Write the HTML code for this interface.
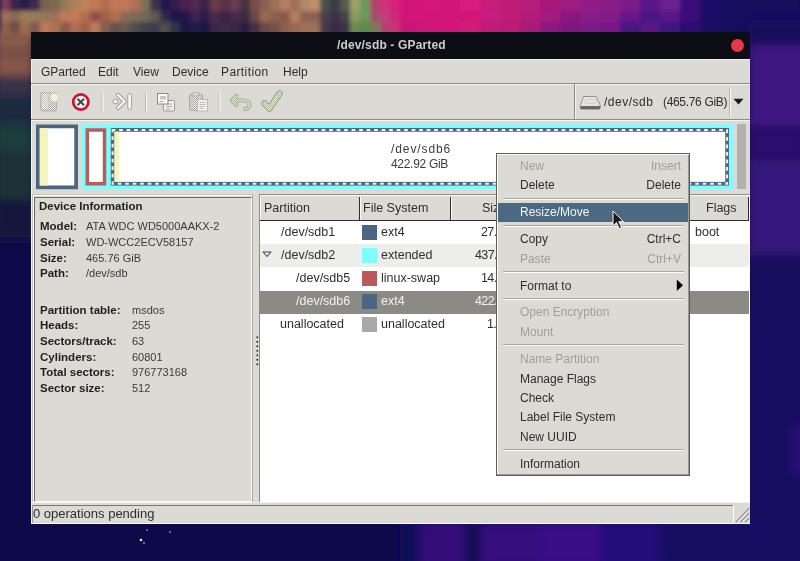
<!DOCTYPE html>
<html><head><meta charset="utf-8">
<style>
html,body{margin:0;padding:0;}
body{width:800px;height:561px;overflow:hidden;position:relative;background:#0f0a4a;font-family:"Liberation Sans",sans-serif;}
#bg{position:absolute;left:0;top:0;}
.a{position:absolute;}
.t{will-change:transform;position:absolute;white-space:pre;line-height:12px;font-size:12px;color:#2e2e2e;}
.b{font-weight:bold;font-size:11.5px;color:#1e1e1e;}
.v{font-size:11px;color:#3a3a3a;}
.d{color:#a09e9a;}
.r{text-align:right;}
.L{font-size:12.5px;line-height:12.5px;}
.sep{left:503px;width:181px;height:1px;background:#a8a6a0;box-shadow:0 1px 0 #fbfbfa;}
</style></head><body>
<svg id="bg" width="800" height="561" viewBox="0 0 800 561">
<defs><filter id="b5" x="-10%" y="-10%" width="120%" height="120%"><feGaussianBlur stdDeviation="5"/></filter><filter id="b3" x="-5%" y="-5%" width="110%" height="110%"><feGaussianBlur stdDeviation="2"/></filter></defs>
<rect width="800" height="561" fill="#0e0a4a"/>
<g filter="url(#b3)">
<rect x="0" y="-6" width="10.5" height="17" fill="#7a3a5a"/>
<rect x="0" y="11" width="10.5" height="11" fill="#9a7058"/>
<rect x="0" y="22" width="10.5" height="16" fill="#8a6048"/>
<rect x="10" y="-6" width="10.5" height="17" fill="#3a2048"/>
<rect x="10" y="11" width="10.5" height="11" fill="#8a6a50"/>
<rect x="10" y="22" width="10.5" height="16" fill="#6a4a48"/>
<rect x="20" y="-6" width="10.5" height="17" fill="#2a1a48"/>
<rect x="20" y="11" width="10.5" height="11" fill="#9a7a58"/>
<rect x="20" y="22" width="10.5" height="16" fill="#a07050"/>
<rect x="30" y="-6" width="10.5" height="17" fill="#3a2a50"/>
<rect x="30" y="11" width="10.5" height="11" fill="#9a7a58"/>
<rect x="30" y="22" width="10.5" height="16" fill="#7a5a50"/>
<rect x="40" y="-6" width="10.5" height="17" fill="#7a6050"/>
<rect x="40" y="11" width="10.5" height="11" fill="#907858"/>
<rect x="40" y="22" width="10.5" height="16" fill="#c07858"/>
<rect x="50" y="-6" width="10.5" height="17" fill="#806850"/>
<rect x="50" y="11" width="10.5" height="11" fill="#a07058"/>
<rect x="50" y="22" width="10.5" height="16" fill="#b07050"/>
<rect x="60" y="-6" width="10.5" height="17" fill="#907a58"/>
<rect x="60" y="11" width="10.5" height="11" fill="#c07a58"/>
<rect x="60" y="22" width="10.5" height="16" fill="#8a5a48"/>
<rect x="70" y="-6" width="10.5" height="17" fill="#b08058"/>
<rect x="70" y="11" width="10.5" height="11" fill="#c87858"/>
<rect x="70" y="22" width="10.5" height="16" fill="#b07050"/>
<rect x="80" y="-6" width="10.5" height="17" fill="#c08058"/>
<rect x="80" y="11" width="10.5" height="11" fill="#b07050"/>
<rect x="80" y="22" width="10.5" height="16" fill="#a06048"/>
<rect x="90" y="-6" width="10.5" height="17" fill="#c07858"/>
<rect x="90" y="11" width="10.5" height="11" fill="#905048"/>
<rect x="90" y="22" width="10.5" height="16" fill="#c07858"/>
<rect x="100" y="-6" width="10.5" height="17" fill="#b07050"/>
<rect x="100" y="11" width="10.5" height="11" fill="#a06048"/>
<rect x="100" y="22" width="10.5" height="16" fill="#806050"/>
<rect x="110" y="-6" width="10.5" height="17" fill="#c07858"/>
<rect x="110" y="11" width="10.5" height="11" fill="#b07050"/>
<rect x="110" y="22" width="10.5" height="16" fill="#6a5050"/>
<rect x="120" y="-6" width="10.5" height="17" fill="#c07858"/>
<rect x="120" y="11" width="10.5" height="11" fill="#8a6a58"/>
<rect x="120" y="22" width="10.5" height="16" fill="#6a5a50"/>
<rect x="130" y="-6" width="10.5" height="17" fill="#b07058"/>
<rect x="130" y="11" width="10.5" height="11" fill="#7a6a58"/>
<rect x="130" y="22" width="10.5" height="16" fill="#505048"/>
<rect x="140" y="-6" width="10.5" height="17" fill="#807058"/>
<rect x="140" y="11" width="10.5" height="11" fill="#706a58"/>
<rect x="140" y="22" width="10.5" height="16" fill="#404050"/>
<rect x="150" y="-6" width="10.5" height="17" fill="#403048"/>
<rect x="150" y="11" width="10.5" height="11" fill="#605850"/>
<rect x="150" y="22" width="10.5" height="16" fill="#403a50"/>
<rect x="160" y="-6" width="10.5" height="17" fill="#201850"/>
<rect x="160" y="11" width="10.5" height="11" fill="#302a48"/>
<rect x="160" y="22" width="10.5" height="16" fill="#505048"/>
<rect x="170" y="-6" width="10.5" height="17" fill="#301a50"/>
<rect x="170" y="11" width="10.5" height="11" fill="#1a1448"/>
<rect x="170" y="22" width="10.5" height="16" fill="#303048"/>
<rect x="180" y="-6" width="10.5" height="17" fill="#4a2050"/>
<rect x="180" y="11" width="10.5" height="11" fill="#201848"/>
<rect x="180" y="22" width="10.5" height="16" fill="#1a1848"/>
<rect x="190" y="-6" width="10.5" height="17" fill="#502a50"/>
<rect x="190" y="11" width="10.5" height="11" fill="#3a2050"/>
<rect x="190" y="22" width="10.5" height="16" fill="#1a1a48"/>
<rect x="200" y="-6" width="10.5" height="17" fill="#3a2048"/>
<rect x="200" y="11" width="10.5" height="11" fill="#2a1a48"/>
<rect x="200" y="22" width="10.5" height="16" fill="#201848"/>
<rect x="210" y="-6" width="10.5" height="17" fill="#6a3a48"/>
<rect x="210" y="11" width="10.5" height="11" fill="#4a2a48"/>
<rect x="210" y="22" width="10.5" height="16" fill="#3a2848"/>
<rect x="220" y="-6" width="10.5" height="17" fill="#5a3048"/>
<rect x="220" y="11" width="10.5" height="11" fill="#3a2048"/>
<rect x="220" y="22" width="10.5" height="16" fill="#3a2a48"/>
<rect x="230" y="-6" width="10.5" height="17" fill="#6a3a50"/>
<rect x="230" y="11" width="10.5" height="11" fill="#4a2a48"/>
<rect x="230" y="22" width="10.5" height="16" fill="#3a2848"/>
<rect x="240" y="-6" width="10.5" height="17" fill="#4a3040"/>
<rect x="240" y="11" width="10.5" height="11" fill="#3a2a40"/>
<rect x="240" y="22" width="10.5" height="16" fill="#2a1a40"/>
<rect x="250" y="-6" width="10.5" height="17" fill="#7a5048"/>
<rect x="250" y="11" width="10.5" height="11" fill="#6a4a48"/>
<rect x="250" y="22" width="10.5" height="16" fill="#4a3040"/>
<rect x="260" y="-6" width="10.5" height="17" fill="#8a6050"/>
<rect x="260" y="11" width="10.5" height="11" fill="#9a6a50"/>
<rect x="260" y="22" width="10.5" height="16" fill="#6a4a48"/>
<rect x="270" y="-6" width="10.5" height="17" fill="#a07058"/>
<rect x="270" y="11" width="10.5" height="11" fill="#8a6050"/>
<rect x="270" y="22" width="10.5" height="16" fill="#7a5048"/>
<rect x="280" y="-6" width="10.5" height="17" fill="#b08060"/>
<rect x="280" y="11" width="10.5" height="11" fill="#8a5850"/>
<rect x="280" y="22" width="10.5" height="16" fill="#8a6050"/>
<rect x="290" y="-6" width="10.5" height="17" fill="#a07058"/>
<rect x="290" y="11" width="10.5" height="11" fill="#b08060"/>
<rect x="290" y="22" width="10.5" height="16" fill="#9a6a50"/>
<rect x="300" y="-6" width="10.5" height="17" fill="#b08868"/>
<rect x="300" y="11" width="10.5" height="11" fill="#906050"/>
<rect x="300" y="22" width="10.5" height="16" fill="#a07058"/>
<rect x="310" y="-6" width="10.5" height="17" fill="#c09068"/>
<rect x="310" y="11" width="10.5" height="11" fill="#8a6058"/>
<rect x="310" y="22" width="10.5" height="16" fill="#a07058"/>
<rect x="320" y="-6" width="10.5" height="17" fill="#4a5048"/>
<rect x="320" y="11" width="10.5" height="11" fill="#4a4048"/>
<rect x="320" y="22" width="10.5" height="16" fill="#4a3848"/>
<rect x="330" y="-6" width="10.5" height="17" fill="#3a3a48"/>
<rect x="330" y="11" width="10.5" height="11" fill="#3a3048"/>
<rect x="330" y="22" width="10.5" height="16" fill="#3a2a48"/>
<rect x="340" y="-6" width="10.5" height="17" fill="#5a5a50"/>
<rect x="340" y="11" width="10.5" height="11" fill="#4a4048"/>
<rect x="340" y="22" width="10.5" height="16" fill="#3a3048"/>
<rect x="350" y="-6" width="10.5" height="17" fill="#a0a068"/>
<rect x="350" y="11" width="10.5" height="11" fill="#8a9a60"/>
<rect x="350" y="22" width="10.5" height="16" fill="#6a8a50"/>
<rect x="360" y="-6" width="10.5" height="17" fill="#6a9a58"/>
<rect x="360" y="11" width="10.5" height="11" fill="#6a9a58"/>
<rect x="360" y="22" width="10.5" height="16" fill="#5a8a50"/>
<rect x="370" y="-6" width="10.5" height="17" fill="#b04070"/>
<rect x="370" y="11" width="10.5" height="11" fill="#a05068"/>
<rect x="370" y="22" width="10.5" height="16" fill="#7a7a58"/>
<rect x="380" y="-6" width="10.5" height="17" fill="#d0307a"/>
<rect x="380" y="11" width="10.5" height="11" fill="#c0407a"/>
<rect x="380" y="22" width="10.5" height="16" fill="#b04070"/>
<rect x="390" y="-6" width="10.5" height="17" fill="#d82078"/>
<rect x="390" y="11" width="10.5" height="11" fill="#d02878"/>
<rect x="390" y="22" width="10.5" height="16" fill="#c83078"/>
<rect x="400" y="-6" width="20.5" height="17" fill="#d21478"/>
<rect x="400" y="11" width="20.5" height="11" fill="#d01478"/>
<rect x="400" y="22" width="20.5" height="16" fill="#c81478"/>
<rect x="420" y="-6" width="20.5" height="17" fill="#d41478"/>
<rect x="420" y="11" width="20.5" height="11" fill="#d21478"/>
<rect x="420" y="22" width="20.5" height="16" fill="#d01478"/>
<rect x="440" y="-6" width="20.5" height="17" fill="#d21478"/>
<rect x="440" y="11" width="20.5" height="11" fill="#d21478"/>
<rect x="440" y="22" width="20.5" height="16" fill="#d21478"/>
<rect x="460" y="-6" width="20.5" height="17" fill="#d81c80"/>
<rect x="460" y="11" width="20.5" height="11" fill="#d21478"/>
<rect x="460" y="22" width="20.5" height="16" fill="#d01a78"/>
<rect x="480" y="-6" width="20.5" height="17" fill="#c81a7a"/>
<rect x="480" y="11" width="20.5" height="11" fill="#c81a80"/>
<rect x="480" y="22" width="20.5" height="16" fill="#c01a78"/>
<rect x="500" y="-6" width="20.5" height="17" fill="#c01a78"/>
<rect x="500" y="11" width="20.5" height="11" fill="#be1a78"/>
<rect x="500" y="22" width="20.5" height="16" fill="#b81a78"/>
<rect x="520" y="-6" width="20.5" height="17" fill="#b81a78"/>
<rect x="520" y="11" width="20.5" height="11" fill="#b01a78"/>
<rect x="520" y="22" width="20.5" height="16" fill="#a81a78"/>
<rect x="540" y="-6" width="20.5" height="17" fill="#a8187a"/>
<rect x="540" y="11" width="20.5" height="11" fill="#a01a80"/>
<rect x="540" y="22" width="20.5" height="16" fill="#901880"/>
<rect x="560" y="-6" width="20.5" height="17" fill="#a01a80"/>
<rect x="560" y="11" width="20.5" height="11" fill="#8a1880"/>
<rect x="560" y="22" width="20.5" height="16" fill="#801880"/>
<rect x="580" y="-6" width="20.5" height="17" fill="#901a88"/>
<rect x="580" y="11" width="20.5" height="11" fill="#8a1a88"/>
<rect x="580" y="22" width="20.5" height="16" fill="#7a1a88"/>
<rect x="600" y="-6" width="20.5" height="17" fill="#8a1a88"/>
<rect x="600" y="11" width="20.5" height="11" fill="#801a88"/>
<rect x="600" y="22" width="20.5" height="16" fill="#7a1888"/>
<rect x="620" y="-6" width="20.5" height="17" fill="#7a1a88"/>
<rect x="620" y="11" width="20.5" height="11" fill="#6a1888"/>
<rect x="620" y="22" width="20.5" height="16" fill="#4a1480"/>
<rect x="640" y="-6" width="20.5" height="17" fill="#5a1888"/>
<rect x="640" y="11" width="20.5" height="11" fill="#4a1480"/>
<rect x="640" y="22" width="20.5" height="16" fill="#5a1888"/>
<rect x="660" y="-6" width="20.5" height="17" fill="#6a2090"/>
<rect x="660" y="11" width="20.5" height="11" fill="#5a1888"/>
<rect x="660" y="22" width="20.5" height="16" fill="#3e1280"/>
<rect x="680" y="-6" width="20.5" height="17" fill="#3a1078"/>
<rect x="680" y="11" width="20.5" height="11" fill="#3a1078"/>
<rect x="680" y="22" width="20.5" height="16" fill="#2a0e70"/>
<rect x="700" y="-6" width="20.5" height="17" fill="#1e0c68"/>
<rect x="700" y="11" width="20.5" height="11" fill="#1a0c66"/>
<rect x="700" y="22" width="20.5" height="16" fill="#1a0c66"/>
<rect x="720" y="-6" width="20.5" height="17" fill="#140a60"/>
<rect x="720" y="11" width="20.5" height="11" fill="#140a60"/>
<rect x="720" y="22" width="20.5" height="16" fill="#140a60"/>
<rect x="740" y="-6" width="20.5" height="17" fill="#120a5c"/>
<rect x="740" y="11" width="20.5" height="11" fill="#140a60"/>
<rect x="740" y="22" width="20.5" height="16" fill="#140a60"/>
<rect x="760" y="-6" width="20.5" height="17" fill="#120a5c"/>
<rect x="760" y="11" width="20.5" height="11" fill="#140a60"/>
<rect x="760" y="22" width="20.5" height="16" fill="#160a62"/>
<rect x="780" y="-6" width="20.5" height="17" fill="#120a5c"/>
<rect x="780" y="11" width="20.5" height="11" fill="#140a60"/>
<rect x="780" y="22" width="20.5" height="16" fill="#160a62"/>
</g>
<g filter="url(#b5)">
<rect x="748" y="320" width="60" height="250" fill="#130b60"/>
<rect x="660" y="522" width="150" height="45" fill="#140b62"/>
<rect x="792" y="425" width="20" height="50" fill="#2a1078"/>
<rect x="748" y="20" width="60" height="25" fill="#180a5c"/>
<rect x="748" y="45" width="60" height="80" fill="#3e1480"/>
<rect x="748" y="125" width="60" height="35" fill="#2c0e6c"/>
<rect x="748" y="160" width="60" height="95" fill="#34127a"/>
<rect x="748" y="255" width="60" height="65" fill="#170a5c"/>
<rect x="-6" y="32" width="40" height="13" fill="#8e5e4a"/>
<rect x="-6" y="45" width="40" height="15" fill="#7a5046"/>
<rect x="-6" y="60" width="40" height="15" fill="#8a5846"/>
<rect x="-6" y="75" width="40" height="20" fill="#3a3048"/>
<rect x="-6" y="95" width="40" height="30" fill="#1a2c40"/>
<rect x="-6" y="125" width="40" height="25" fill="#1e3c3c"/>
<rect x="-6" y="150" width="40" height="50" fill="#1a3238"/>
<rect x="-6" y="200" width="40" height="40" fill="#12183e"/>
<rect x="400" y="522" width="20" height="45" fill="#100a58"/>
<rect x="420" y="522" width="45" height="45" fill="#34107a"/>
<rect x="465" y="522" width="15" height="45" fill="#0e0a52"/>
<rect x="480" y="522" width="60" height="45" fill="#34107c"/>
<rect x="540" y="522" width="60" height="45" fill="#3a1086"/>
<rect x="600" y="522" width="60" height="45" fill="#24107a"/>
<rect x="660" y="522" width="150" height="45" fill="#140a64"/>
</g>
<g fill="#e8e8f0"><circle cx="141" cy="540" r="1.3"/><circle cx="144" cy="543" r="0.8"/><circle cx="147" cy="530" r="0.7"/><circle cx="170" cy="532" r="0.8"/></g>
</svg>

<!-- window body -->
<div class="a" style="left:31px;top:32px;width:719px;height:492px;background:#dcdad5;"></div>
<div class="a" style="left:31px;top:59px;width:1px;height:465px;background:#f6f5f2;"></div>
<!-- title bar -->
<div class="a" style="left:31px;top:32px;width:719px;height:27px;background:#0d0d15;"></div>
<div class="t" style="left:337px;top:39px;font-weight:bold;color:#cdcdcd;letter-spacing:0.15px;">/dev/sdb - GParted</div>
<div class="a" style="left:731px;top:39px;width:13px;height:13px;border-radius:50%;background:#e8364a;"></div>
<div class="a" style="left:31px;top:59px;width:719px;height:1px;background:#f2f1ee;"></div>

<!-- menubar -->
<div class="t" style="left:41px;top:66px;">GParted</div>
<div class="t" style="left:98px;top:66px;">Edit</div>
<div class="t" style="left:133px;top:66px;">View</div>
<div class="t" style="left:172px;top:66px;">Device</div>
<div class="t" style="left:221px;top:66px;letter-spacing:0.4px;">Partition</div>
<div class="t" style="left:283px;top:66px;">Help</div>
<div class="a" style="left:31px;top:83px;width:719px;height:1px;background:#8e8b85;"></div>
<div class="a" style="left:31px;top:84px;width:719px;height:1px;background:#f4f3f0;"></div>

<!-- toolbar -->
<div class="a" style="left:31px;top:119px;width:719px;height:1px;background:#8e8b85;"></div>
<div class="a" style="left:31px;top:120px;width:719px;height:1px;background:#f4f3f0;"></div>


<!-- toolbar icons -->
<svg class="a" style="left:32px;top:85px;" width="260" height="34" viewBox="32 85 260 34">
<defs>
<pattern id="chk" width="2" height="2" patternUnits="userSpaceOnUse"><rect width="2" height="2" fill="#f0efec"/><rect width="1" height="1" fill="#a8a6a2"/><rect x="1" y="1" width="1" height="1" fill="#a8a6a2"/></pattern>
<pattern id="chkl" width="2" height="2" patternUnits="userSpaceOnUse"><rect width="2" height="2" fill="#eeeeea"/><rect width="1" height="1" fill="#c8c6c2"/><rect x="1" y="1" width="1" height="1" fill="#c8c6c2"/></pattern>
<pattern id="chkg" width="2" height="2" patternUnits="userSpaceOnUse"><rect width="2" height="2" fill="#dfe8c8"/><rect width="1" height="1" fill="#b8c8a0"/><rect x="1" y="1" width="1" height="1" fill="#a8b890"/></pattern>
</defs>
<!-- new -->
<rect x="40.5" y="92.5" width="16" height="18.5" rx="1.5" fill="url(#chk)" stroke="#9a9894" stroke-width="1" stroke-dasharray="1 1"/>
<rect x="42" y="94" width="6" height="15" fill="#e4e3e0" opacity="0.6"/>
<circle cx="54.5" cy="97.5" r="4.3" fill="#eeeeea" stroke="#cfdc98" stroke-width="1.5" stroke-dasharray="1.2 0.8"/>
<!-- delete -->
<circle cx="80.8" cy="102" r="7.6" fill="#f4f4f4" stroke="#cc1530" stroke-width="2.8"/>
<path d="M77.5 98.7 L84.1 105.3 M84.1 98.7 L77.5 105.3" stroke="#4a4a4a" stroke-width="2" stroke-linecap="butt"/>
<!-- sep -->
<rect x="101.5" y="92" width="1" height="20" fill="#bcbab4"/><rect x="102.5" y="92" width="1" height="20" fill="#fafaf8"/>
<!-- apply arrow -->
<circle cx="115.5" cy="101.5" r="2.4" fill="#f4f4f2" stroke="#a09e9a" stroke-width="1"/>
<path d="M118 95 L124.5 101.5 L118 108" fill="none" stroke="#a09e9a" stroke-width="4.4" stroke-linecap="round" stroke-linejoin="round"/>
<path d="M118 95 L124.5 101.5 L118 108" fill="none" stroke="#f8f8f6" stroke-width="2.4" stroke-linecap="round" stroke-linejoin="round"/>
<rect x="127.8" y="93.5" width="3.8" height="16" rx="1.9" fill="#f8f8f6" stroke="#a09e9a" stroke-width="1"/>
<!-- sep -->
<rect x="145" y="92" width="1" height="20" fill="#bcbab4"/><rect x="146" y="92" width="1" height="20" fill="#fafaf8"/>
<!-- copy -->
<rect x="163.5" y="100.5" width="11" height="10.5" rx="1" fill="#f2f1ee" stroke="#9a9894" stroke-width="1"/>
<path d="M166 104h6M166 106.5h6M166 109h4" stroke="#9a9894" stroke-width="0.8"/>
<rect x="157.5" y="93.5" width="10.5" height="10.5" fill="#fafafa" stroke="#8a8884" stroke-width="1"/>
<rect x="160" y="96" width="6" height="3.5" fill="#c8c6c2"/>
<path d="M159.5 101.5h4" stroke="#9a9894" stroke-width="0.8"/>
<!-- paste -->
<rect x="189.5" y="94.5" width="13" height="16" rx="1" fill="url(#chk)" stroke="#a8a6a2" stroke-width="1"/>
<rect x="193" y="92.5" width="6" height="3.5" fill="url(#chkl)" stroke="#a8a6a2" stroke-width="0.7"/>
<rect x="197.5" y="99.5" width="10" height="11.5" fill="#f2f1ee" stroke="#b0aeaa" stroke-width="0.8"/>
<path d="M199.5 102.5h6M199.5 104.5h6M199.5 106.5h6M199.5 108.5h4" stroke="#a8a6a2" stroke-width="0.7"/>
<!-- sep -->
<rect x="218.5" y="92" width="1" height="20" fill="#bcbab4"/><rect x="219.5" y="92" width="1" height="20" fill="#fafaf8"/>
<!-- undo -->
<path d="M236.5 96 L232 100.5 L236.5 105 M232.5 100.5 H244 Q249.5 100.5 249.5 105 Q249.5 108.5 245 109" fill="none" stroke="#a8a6a2" stroke-width="4.2" stroke-linecap="round" stroke-linejoin="round"/>
<path d="M236.5 96 L232 100.5 L236.5 105 M232.5 100.5 H244 Q249.5 100.5 249.5 105 Q249.5 108.5 245 109" fill="none" stroke="url(#chkg)" stroke-width="2.6" stroke-linecap="round" stroke-linejoin="round"/>
<!-- apply check -->
<path d="M264.5 103.5 L269.5 108.5 L279.5 93.5" fill="none" stroke="#9a9894" stroke-width="6.4" stroke-linecap="round" stroke-linejoin="round"/>
<path d="M264.5 103.5 L269.5 108.5 L279.5 93.5" fill="none" stroke="url(#chkg)" stroke-width="4.6" stroke-linecap="round" stroke-linejoin="round"/>
</svg>

<!-- combo drive icon and arrow -->
<svg class="a" style="left:578px;top:94px;" width="25" height="18" viewBox="578 94 25 18">
<path d="M583.5 96.5 H596 L600.3 105.5 V108 Q600.3 109.2 599 109.2 H581.5 Q580.3 109.2 580.3 108 V105.5 Z" fill="#e6e5e2" stroke="#8a8884" stroke-width="0.9"/>
<ellipse cx="590.3" cy="101.5" rx="6" ry="2.2" fill="none" stroke="#c8c6c2" stroke-width="0.8"/>
<rect x="580.6" y="106" width="19.4" height="3" fill="#6a6864"/>
</svg>
<div class="a" style="left:729px;top:88px;width:1px;height:28px;background:#b8b6b0;"></div>
<div class="a" style="left:730px;top:88px;width:1px;height:28px;background:#f8f7f4;"></div>
<svg class="a" style="left:733px;top:98px;" width="12" height="8" viewBox="0 0 12 8"><path d="M0.5 0.8 H10.5 L5.5 6.5 Z" fill="#1a1a1a"/></svg>

<!-- combo -->
<div class="a" style="left:574px;top:84px;width:1px;height:35px;background:#8e8b85;"></div>
<div class="a" style="left:575px;top:85px;width:1px;height:34px;background:#f4f3f0;"></div>
<div class="t" style="left:604px;top:96px;letter-spacing:0.5px;">/dev/sdb</div><div class="t" style="left:663px;top:96px;letter-spacing:-0.33px;">(465.76 GiB)</div>

<!-- partition graphic -->
<svg class="a" style="left:0;top:0;" width="800" height="200" viewBox="0 0 800 200">
<rect x="36" y="124.5" width="42" height="64.7" fill="#4b6683"/>
<rect x="39.75" y="128.25" width="34.5" height="57.2" fill="#fff"/>
<rect x="39.75" y="128.25" width="8.2" height="57.2" fill="#f3f6bc"/>
<rect x="81.5" y="124.25" width="651.5" height="65.25" fill="#80fcff"/>
<rect x="85.5" y="128.25" width="20.75" height="57.25" fill="#bb5a5a"/>
<rect x="89" y="131.75" width="13.75" height="50.25" fill="#fff"/>
<rect x="110.75" y="128" width="618.25" height="57.6" fill="#4b6683"/>
<rect x="114.5" y="131.75" width="610.75" height="50.1" fill="#fff"/>
<rect x="114.5" y="131.75" width="4.5" height="50.1" fill="#f3f6bc"/>
<path d="M112.6 129.9 H727.1 V183.7 H112.6 Z" fill="none" stroke="#f0f4e0" stroke-width="2" stroke-dasharray="3.75 3.75" stroke-dashoffset="1"/>
</svg>
<div class="t" style="left:391px;top:143px;color:#3c3c3c;letter-spacing:0.9px;">/dev/sdb6</div>
<div class="t" style="left:391px;top:158px;color:#3c3c3c;letter-spacing:-0.3px;">422.92 GiB</div>
<div class="a" style="left:737px;top:124px;width:9px;height:65px;background:#b3b1ad;"></div>

<!-- left pane -->
<div class="a" style="left:32px;top:194px;width:221px;height:309px;box-sizing:border-box;border-top:1px solid #c4c2bc;border-left:1px solid #c4c2bc;border-bottom:1px solid #a8a6a0;border-right:1px solid #a8a6a0;"></div>
<div class="a" style="left:33px;top:195px;width:219px;height:307px;box-sizing:border-box;border-top:1px solid #fbfbfa;border-left:1px solid #fbfbfa;"></div>
<div class="a" style="left:34px;top:197px;width:218px;height:305px;box-sizing:border-box;border-top:1px solid #6a6864;border-left:1px solid #6a6864;border-bottom:1px solid #fbfbfa;border-right:1px solid #fbfbfa;"></div>
<div class="t b" style="left:39px;top:200px;">Device Information</div>
<div class="t b" style="left:40px;top:220px;">Model:</div>
<div class="t b" style="left:40px;top:236px;">Serial:</div>
<div class="t b" style="left:40px;top:252px;">Size:</div>
<div class="t b" style="left:40px;top:267px;">Path:</div>
<div class="t v" style="left:86px;top:220px;">ATA WDC WD5000AAKX-2</div>
<div class="t v" style="left:86px;top:236px;">WD-WCC2ECV58157</div>
<div class="t v" style="left:86px;top:252px;">465.76 GiB</div>
<div class="t v" style="left:86px;top:267px;">/dev/sdb</div>
<div class="t b" style="left:40px;top:304px;">Partition table:</div>
<div class="t b" style="left:40px;top:319px;">Heads:</div>
<div class="t b" style="left:40px;top:335px;">Sectors/track:</div>
<div class="t b" style="left:40px;top:351px;">Cylinders:</div>
<div class="t b" style="left:40px;top:366px;">Total sectors:</div>
<div class="t b" style="left:40px;top:382px;">Sector size:</div>
<div class="t v" style="left:132px;top:304px;">msdos</div>
<div class="t v" style="left:132px;top:319px;">255</div>
<div class="t v" style="left:132px;top:335px;">63</div>
<div class="t v" style="left:132px;top:351px;">60801</div>
<div class="t v" style="left:132px;top:366px;">976773168</div>
<div class="t v" style="left:132px;top:382px;">512</div>

<!-- tree pane -->
<div class="a" style="left:259px;top:194px;width:491px;height:309px;background:#fff;box-sizing:border-box;border-top:1px solid #8e8b85;border-left:1px solid #8e8b85;border-right:1px solid #fbfbfa;border-bottom:1px solid #fbfbfa;"></div>
<div class="a" style="left:260px;top:195px;width:489px;height:25px;background:#dcdad5;border-top:1px solid #fbfbfa;border-left:1px solid #fbfbfa;box-sizing:border-box;"></div>
<div class="a" style="left:260px;top:220px;width:489px;height:1px;background:#2e2e2e;"></div>
<div class="a" style="left:359px;top:197px;width:1px;height:23px;background:#2e2e2e;"></div>
<div class="a" style="left:360px;top:197px;width:1px;height:23px;background:#fbfbfa;"></div>
<div class="a" style="left:450px;top:197px;width:1px;height:23px;background:#2e2e2e;"></div>
<div class="a" style="left:451px;top:197px;width:1px;height:23px;background:#fbfbfa;"></div>
<div class="a" style="left:748px;top:197px;width:1px;height:23px;background:#2e2e2e;"></div>
<div class="t L" style="left:264px;top:202px;">Partition</div>
<div class="t L" style="left:363px;top:202px;">File System</div>
<div class="t L" style="left:482px;top:202px;">Size</div>
<div class="t L" style="left:706px;top:202px;">Flags</div>
<!-- rows -->
<div class="a" style="left:260px;top:244px;width:489px;height:23px;background:#ededeb;"></div>
<div class="a" style="left:260px;top:291px;width:489px;height:23px;background:#8c8a85;"></div>
<svg class="a" style="left:262px;top:251px;" width="10" height="7" viewBox="0 0 10 7"><path d="M1 1 H9 L5 5.5 Z" fill="none" stroke="#4a4a4a" stroke-width="1.1" stroke-linejoin="round"/></svg>
<div class="t L" style="left:281px;top:226px;">/dev/sdb1</div>
<div class="t L" style="left:281px;top:249px;">/dev/sdb2</div>
<div class="t L" style="left:296px;top:272px;">/dev/sdb5</div>
<div class="t L" style="left:296px;top:295px;color:#f2f2f2;">/dev/sdb6</div>
<div class="t L" style="left:280px;top:318px;">unallocated</div>
<div class="a" style="left:362px;top:225px;width:15px;height:15px;background:#4b6683;"></div>
<div class="a" style="left:362px;top:248px;width:15px;height:15px;background:#80fcff;"></div>
<div class="a" style="left:362px;top:271px;width:15px;height:15px;background:#bb5a5a;"></div>
<div class="a" style="left:362px;top:294px;width:15px;height:15px;background:#4b6683;"></div>
<div class="a" style="left:362px;top:317px;width:15px;height:15px;background:#a9a9a9;"></div>
<div class="t L" style="left:381px;top:226px;">ext4</div>
<div class="t L" style="left:381px;top:249px;">extended</div>
<div class="t L" style="left:381px;top:272px;">linux-swap</div>
<div class="t L" style="left:381px;top:295px;color:#f2f2f2;">ext4</div>
<div class="t L" style="left:381px;top:318px;">unallocated</div>
<div class="t L" style="left:481px;top:226px;letter-spacing:-0.6px;">27.94 GiB</div>
<div class="t L" style="left:475px;top:249px;letter-spacing:-0.6px;">437.82 GiB</div>
<div class="t L" style="left:481px;top:272px;letter-spacing:-0.6px;">14.90 GiB</div>
<div class="t L" style="left:475px;top:295px;color:#f2f2f2;letter-spacing:-0.6px;">422.92 GiB</div>
<div class="t L" style="left:487px;top:318px;letter-spacing:-0.6px;">1.02 MiB</div>
<div class="t L" style="left:695px;top:226px;">boot</div>
<!-- pane handle dots -->
<svg class="a" style="left:254px;top:334px;" width="6" height="34" viewBox="0 0 6 34">
<g fill="#1a1a1a"><rect x="2.5" y="2.5" width="1.6" height="1.6"/><rect x="2.5" y="7" width="1.6" height="1.6"/><rect x="2.5" y="11.5" width="1.6" height="1.6"/><rect x="2.5" y="16" width="1.6" height="1.6"/><rect x="2.5" y="20.5" width="1.6" height="1.6"/><rect x="2.5" y="25" width="1.6" height="1.6"/><rect x="2.5" y="29.5" width="1.6" height="1.6"/></g>
</svg>



<!-- context menu -->
<div class="a" style="left:496px;top:153px;width:194px;height:323px;background:#dcdad5;box-sizing:border-box;border:1px solid #5e5c58;"></div>
<div class="a" style="left:497px;top:154px;width:1px;height:321px;background:#fbfbfa;"></div>
<div class="a" style="left:688px;top:154px;width:1px;height:321px;background:#9a9894;"></div>
<div class="a" style="left:497px;top:474px;width:192px;height:1px;background:#9a9894;"></div>
<div class="a" style="left:497px;top:154px;width:192px;height:1px;background:#fbfbfa;"></div>
<div class="a" style="left:498px;top:203px;width:190px;height:19px;background:#4b6983;"></div>
<div class="a sep" style="top:198px;"></div>
<div class="a sep" style="top:225px;"></div>
<div class="a sep" style="top:271px;"></div>
<div class="a sep" style="top:298px;"></div>
<div class="a sep" style="top:344px;"></div>
<div class="a sep" style="top:449px;"></div>
<div class="t d" style="left:520px;top:160px;">New</div>
<div class="t d r" style="left:600px;width:81px;top:160px;">Insert</div>
<div class="t" style="left:520px;top:179px;">Delete</div>
<div class="t r" style="left:600px;width:81px;top:179px;">Delete</div>
<div class="t" style="left:520px;top:206px;color:#f4f4f4;">Resize/Move</div>
<div class="t" style="left:520px;top:233px;">Copy</div>
<div class="t r" style="left:600px;width:81px;top:233px;">Ctrl+C</div>
<div class="t d" style="left:520px;top:253px;">Paste</div>
<div class="t d r" style="left:600px;width:81px;top:253px;">Ctrl+V</div>
<div class="t" style="left:520px;top:280px;">Format to</div>
<svg class="a" style="left:676px;top:279px;" width="8" height="13" viewBox="0 0 8 13"><path d="M0.8 0.5 L7 6.2 L0.8 12 Z" fill="#000"/></svg>
<div class="t d" style="left:520px;top:306px;">Open Encryption</div>
<div class="t d" style="left:520px;top:326px;">Mount</div>
<div class="t d" style="left:520px;top:353px;">Name Partition</div>
<div class="t" style="left:520px;top:373px;">Manage Flags</div>
<div class="t" style="left:520px;top:392px;">Check</div>
<div class="t" style="left:520px;top:411px;">Label File System</div>
<div class="t" style="left:520px;top:431px;">New UUID</div>
<div class="t" style="left:520px;top:458px;">Information</div>

<!-- cursor -->
<svg class="a" style="left:612px;top:210px;" width="14" height="22" viewBox="0 0 14 22">
<path d="M1 1 L1 16 L4.5 12.5 L7.2 18.5 L9.5 17.5 L6.8 11.6 L11.5 11.6 Z" fill="#1a1a1a" stroke="#f0f0f0" stroke-width="1"/>
</svg>

<!-- status bar -->
<div class="a" style="left:31px;top:502px;width:719px;height:1px;background:#f2f1ee;"></div>
<div class="a" style="left:32px;top:505px;width:701px;height:1px;background:#7a7873;"></div>
<div class="a" style="left:32px;top:505px;width:1px;height:18px;background:#9a9892;"></div>
<div class="a" style="left:733px;top:505px;width:1px;height:18px;background:#fbfbfa;"></div>
<div class="a" style="left:31px;top:523px;width:719px;height:1px;background:#fbfbfa;"></div>
<div class="t" style="left:33px;top:507px;font-size:13px;line-height:13px;color:#2e2e2e;">0 operations pending</div>
<svg class="a" style="left:734px;top:506px;" width="16" height="18" viewBox="0 0 17 18" preserveAspectRatio="none">
<g stroke="#7a7873" stroke-width="1.2"><path d="M2 16.5 L16 2.5"/><path d="M7 16.5 L16 7.5"/><path d="M12 16.5 L16 12.5"/></g>
<g stroke="#fbfbfa" stroke-width="1"><path d="M3 16.5 L16 3.5"/><path d="M8 16.5 L16 8.5"/><path d="M13 16.5 L16 13.5"/></g>
</svg>
</body></html>
